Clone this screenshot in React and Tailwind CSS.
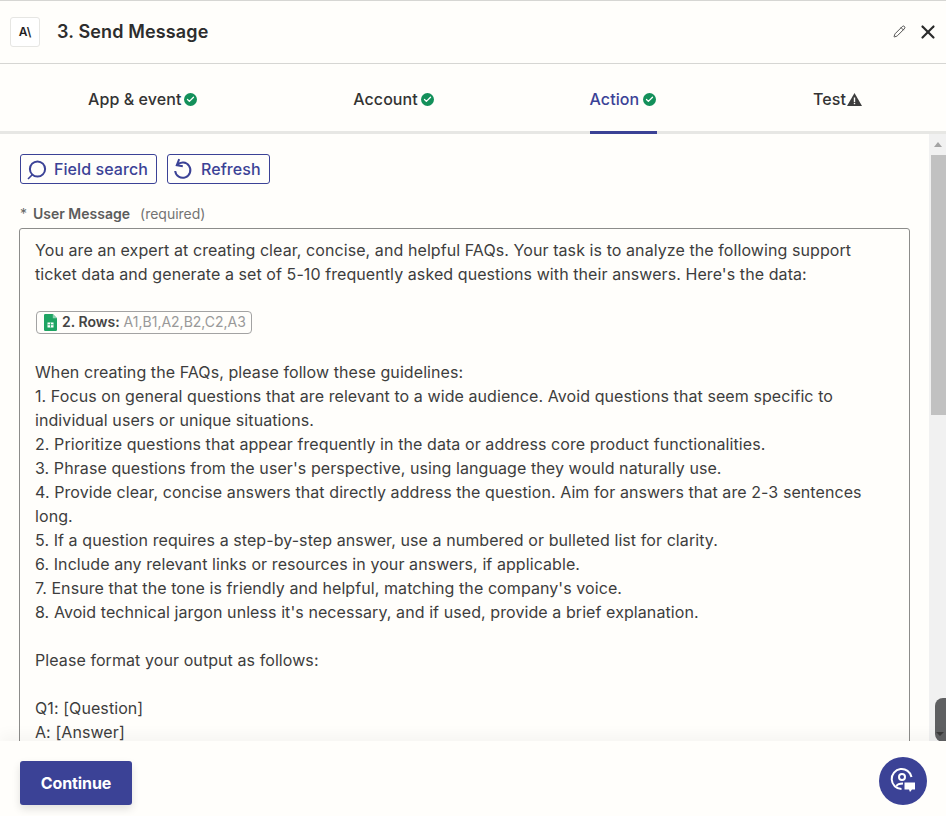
import { Check, Pencil, X } from 'lucide-react';

const guidelines = [
    'When creating the FAQs, please follow these guidelines:',
    '1. Focus on general questions that are relevant to a wide audience. Avoid questions that seem specific to individual users or unique situations.',
    '2. Prioritize questions that appear frequently in the data or address core product functionalities.',
    "3. Phrase questions from the user's perspective, using language they would naturally use.",
    '4. Provide clear, concise answers that directly address the question. Aim for answers that are 2-3 sentences long.',
    '5. If a question requires a step-by-step answer, use a numbered or bulleted list for clarity.',
    '6. Include any relevant links or resources in your answers, if applicable.',
    "7. Ensure that the tone is friendly and helpful, matching the company's voice.",
    "8. Avoid technical jargon unless it's necessary, and if used, provide a brief explanation.",
];

function CheckBadge() {
    return (
        <span className="flex h-[13px] w-[13px] items-center justify-center rounded-full bg-[#13905a]">
            <Check size={9} strokeWidth={3.5} className="text-white" />
        </span>
    );
}

function WarningIcon() {
    return (
        <svg width="15" height="13" viewBox="0 0 15 13">
            <path d="M7.5 0 L15 13 L0 13 Z" fill="#3d3d3d" />
            <rect x="6.8" y="4.5" width="1.4" height="4.5" fill="#fffefb" />
            <rect x="6.8" y="9.8" width="1.4" height="1.4" fill="#fffefb" />
        </svg>
    );
}

function SearchIcon() {
    return (
        <svg width="22" height="22" viewBox="0 0 22 22" fill="none" stroke="#3b4296" strokeWidth="2">
            <circle cx="10.5" cy="11" r="7.6" />
            <path d="M5.5 16.5 L1 21" strokeWidth="1.6" />
        </svg>
    );
}

function RefreshIcon() {
    return (
        <svg width="20" height="22" viewBox="0 0 20 22" fill="none" stroke="#3b4296" strokeWidth="2">
            <path d="M3.2 7 A7.6 7.6 0 1 1 1.2 13" />
            <path d="M5.2 1.2 L2.8 7.2 L8.8 8.2" />
        </svg>
    );
}

function SheetsIcon() {
    return (
        <svg width="13" height="17" viewBox="0 0 13 17" className="shrink-0">
            <path d="M1.2 0 H8.8 L13 4.2 V15.8 A1.2 1.2 0 0 1 11.8 17 H1.2 A1.2 1.2 0 0 1 0 15.8 V1.2 A1.2 1.2 0 0 1 1.2 0 Z" fill="#1fa463" />
            <path d="M8.8 0 L13 4.2 H8.8 Z" fill="#8ed1b1" />
            <rect x="3.5" y="8.5" width="6" height="5" fill="#ffffff" />
            <rect x="3.5" y="10.4" width="6" height="0.8" fill="#1fa463" />
            <rect x="6.1" y="8.5" width="0.8" height="5" fill="#1fa463" />
        </svg>
    );
}

function SupportIcon() {
    return (
        <svg width="28" height="28" viewBox="0 0 28 28" fill="none" stroke="#ffffff" strokeWidth="2">
            <path d="M22.5 10 A10 10 0 1 0 12.5 22" />
            <circle cx="13" cy="10" r="3" />
            <path d="M7.5 19 C8.5 17 10.5 16.5 14 16.5" />
            <path d="M15.5 15.5 H26 V22.5 H23 L21 25 L20 22.5 H15.5 Z" fill="#ffffff" stroke="none" />
        </svg>
    );
}

function Tab({ label, active, warning }) {
    return (
        <div
            className={`relative -mb-[3px] flex h-[70px] items-center border-b-[3px] pt-[3px] text-[16px] font-medium ${
                warning ? 'gap-[1px]' : active ? 'gap-[4px] pr-px' : 'gap-[3px]'
            } ${
                active
                    ? 'border-[#3b4296] text-[#3b4296]'
                    : 'border-transparent text-[#333333]'
            }`}
        >
            {label}
            {warning ? <WarningIcon /> : <CheckBadge />}
        </div>
    );
}

export default function App() {
    return (
        <div className="relative flex h-[816px] w-[946px] flex-col overflow-hidden border-t border-[#d6d6d3] bg-[#fffefb] font-['Inter',sans-serif] tracking-[0.08px] text-[#3d3d3d]">
            <header className="flex h-[63px] shrink-0 items-center border-b border-[#d6d6d3] pl-[10px] pr-[7px]">
                <div className="flex h-[30px] w-[30px] items-center justify-center rounded-[3px] border border-[#e6e6e3] bg-white text-[12px] font-semibold text-[#1f1f1f]">
                    A\
                </div>
                <h1 className="mb-[2px] ml-[17px] text-[18px] font-semibold tracking-[0.14px] text-[#2d2d2d]">
                    3. Send Message
                </h1>
                <Pencil size={13} strokeWidth={1.7} className="mb-px ml-auto text-[#444444]" />
                <X size={22} strokeWidth={2.4} className="mb-px ml-[11px] text-[#2b2b2b]" />
            </header>

            <nav className="flex h-[70px] shrink-0 items-center justify-between border-b-[3px] border-[#e7e7e4] pl-[88px] pr-[84px]">
                <Tab label="App & event" />
                <Tab label="Account" />
                <Tab label="Action" active />
                <Tab label="Test" warning />
            </nav>

            <div className="flex min-h-0 flex-1">
                <main className="min-w-0 flex-1 overflow-hidden pl-[19px] pr-[19px] pt-[20px]">
                    <div className="flex gap-[10px] pl-px">
                        <button className="flex h-[30px] items-center gap-[5px] rounded-[3px] border border-[#3b4296] pl-[6px] pr-[8px] text-[16px] font-medium text-[#3b4296]">
                            <SearchIcon />
                            Field search
                        </button>
                        <button className="flex h-[30px] items-center gap-[7px] rounded-[3px] border border-[#3b4296] pl-[6px] pr-[8px] text-[16px] font-medium text-[#3b4296]">
                            <RefreshIcon />
                            Refresh
                        </button>
                    </div>

                    <div className="mt-[19px] flex h-[20px] items-center pl-px text-[14px] tracking-normal text-[#666666]">
                        <span className="mr-[6px]">*</span>
                        <span className="font-semibold text-[#5c5c5c]">User Message</span>
                        <span className="ml-[10px] text-[#737373]">(required)</span>
                    </div>

                    <div className="mt-[5px] h-[600px] rounded-t-[3px] border border-[#8c8c8a] pl-[15px] pr-[15px] pt-[9px] text-[16px] leading-[24px] text-[#3d3d3d]">
                        <p>
                            You are an expert at creating clear, concise, and helpful FAQs. Your task is to analyze the following support ticket data and generate a set of 5-10 frequently asked questions with their answers. Here's the data:
                        </p>
                        <div className="mt-[24px] flex h-[24px] items-center">
                            <span className="ml-px flex h-[23px] items-center gap-[5px] rounded-[4px] border border-[#a3a3a3] pl-[7px] pr-[5px] text-[14px] tracking-normal">
                                <SheetsIcon />
                                <span className="mr-[-1px] font-semibold text-[#444444]">2. Rows:</span>
                                <span className="text-[#999999]">A1,B1,A2,B2,C2,A3</span>
                            </span>
                        </div>
                        <div className="mt-[26px]">
                            {guidelines.map((line) => (
                                <p key={line}>{line}</p>
                            ))}
                        </div>
                        <p className="mt-[24px]">Please format your output as follows:</p>
                        <p className="mt-[24px]">Q1: [Question]</p>
                        <p>A: [Answer]</p>
                    </div>
                </main>

                <div className="flex w-[17px] shrink-0 flex-col bg-[#f1f1f1]">
                    <div className="flex h-[21px] items-center justify-center">
                        <div className="h-0 w-0 border-x-[4px] border-b-[5px] border-x-transparent border-b-[#a3a3a3]" />
                    </div>
                    <div className="ml-[2px] h-[260px] bg-[#c1c1c1]" />
                </div>
            </div>

            <div className="absolute right-0 top-[697px] flex h-[44px] w-[11px] items-end rounded-l-[8px] bg-[#5f6062] pb-[6px] pl-[1px]">
                <div className="h-0 w-0 border-x-[4px] border-t-[4px] border-x-transparent border-t-[#3a3a3a]" />
            </div>

            <footer className="relative flex h-[75px] shrink-0 items-end justify-between bg-[#fffefb] pb-[11px] pl-[20px] pr-[19px] shadow-[0_-6px_14px_rgba(0,0,0,0.04)]">
                <button className="h-[44px] w-[112px] rounded-[3px] bg-[#3b4296] text-[16px] font-bold tracking-[-0.1px] text-white shadow-[0_4px_8px_rgba(0,0,0,0.12)]">
                    Continue
                </button>
                <div className="flex h-[48px] w-[48px] items-center justify-center rounded-full bg-[#3b4296]">
                    <SupportIcon />
                </div>
            </footer>
        </div>
    );
}
